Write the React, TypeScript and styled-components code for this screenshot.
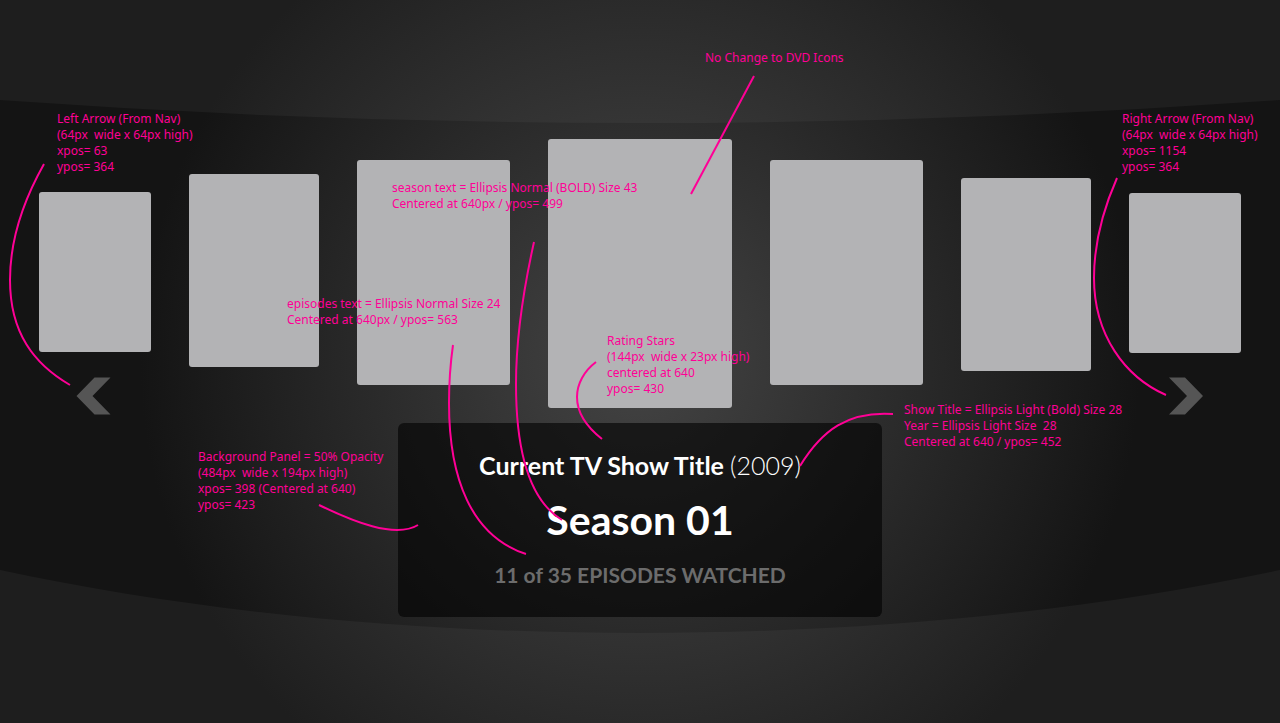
import React from 'react';
import styled, { createGlobalStyle } from 'styled-components';

const PINK = '#ff0096';

const GlobalStyle = createGlobalStyle`
  * { box-sizing: border-box; }
  body { margin: 0; background: #1e1e1e; }
`;

const Stage = styled.main`
  position: relative;
  min-height: 100vh;
  padding-top: 139px;
  overflow: hidden;
  font-family: Lato, 'Liberation Sans', sans-serif;
`;

const Backdrop = styled.svg`
  position: absolute;
  inset: 0;
  width: 100%;
  height: 100%;
`;

const Carousel = styled.ul`
  position: relative;
  display: flex;
  justify-content: center;
  align-items: flex-start;
  gap: 38px;
  min-height: 269px;
  margin: 0;
  padding: 0;
  list-style: none;
`;

const Poster = styled.li<{ $width: number; $height: number; $drop: number }>`
  flex: none;
  width: ${(p) => p.$width}px;
  height: ${(p) => p.$height}px;
  margin-top: ${(p) => p.$drop}px;
  border-radius: 3px;
  background: #b3b3b5;
`;

const Controls = styled.div`
  position: relative;
  display: flex;
  justify-content: space-between;
  align-items: flex-start;
  max-width: 1280px;
  margin: -44px auto 0;
  padding: 0 62px;
`;

const ArrowButton = styled.button`
  width: 64px;
  height: 64px;
  padding: 0;
  border: 0;
  background: none;
  cursor: pointer;

  svg {
    display: block;
    fill: #555;
  }
`;

const InfoPanel = styled.section`
  flex: 0 1 484px;
  min-height: 194px;
  margin-top: 59px;
  padding-top: 26px;
  border-radius: 6px;
  background: rgba(0, 0, 0, 0.6);
  color: #fff;
  text-align: center;
`;

const ShowTitle = styled.h1`
  margin: 0;
  font-size: 25px;
  font-weight: 700;
  line-height: 32px;
`;

const Year = styled.span`
  font-weight: 300;
`;

const Season = styled.h2`
  margin: 15px 0 0;
  font-size: 41px;
  font-weight: 700;
  line-height: 48px;
`;

const Episodes = styled.p`
  margin: 17px 0 0;
  color: #6c6c6c;
  font-size: 21px;
  font-weight: 700;
  line-height: 28px;
`;

/* Annotation layer: stays centred on the stage and lies over the mock-up. */
const Annotations = styled.div`
  position: absolute;
  top: 0;
  left: calc(50% - 640px);
  width: 1280px;
  pointer-events: none;
`;

const Leaders = styled.svg`
  display: block;
  fill: none;
  stroke: ${PINK};
  stroke-width: 2;
`;

const Note = styled.p<{ $x: number; $y: number }>`
  position: absolute;
  left: ${(p) => p.$x}px;
  top: ${(p) => p.$y}px;
  margin: 0;
  color: ${PINK};
  font-family: 'Noto Sans', 'Open Sans', sans-serif;
  font-size: 12px;
  line-height: 16px;
  white-space: pre;
`;

const posters = [
  { width: 112, height: 160, drop: 53 },
  { width: 130, height: 193, drop: 35 },
  { width: 153, height: 225, drop: 21 },
  { width: 184, height: 269, drop: 0 },
  { width: 153, height: 225, drop: 21 },
  { width: 130, height: 193, drop: 39 },
  { width: 112, height: 160, drop: 54 },
];

const leaders = [
  'M754 76L691 194',
  'M44 164C22 203 10 243 10 280C10 333 34 364 70 385',
  'M1117 178C1102 212 1094 247 1094 278C1094 335 1125 377 1166 395',
  'M534 242C524 287 516 335 516 384C516 452 529 500 562 520',
  'M453 345C450 366 449 385 449 403C449 478 471 536 526 554',
  'M596 362C584 371 577 384 577 397C577 413 588 428 602 439',
  'M893 414C848 411 822 430 800 466',
  'M319 505C352 521 395 539 418 525',
];

const notes = [
  { x: 705, y: 50, lines: ['No Change to DVD Icons'] },
  { x: 57, y: 111, lines: ['Left Arrow (From Nav)', '(64px  wide x 64px high)', 'xpos= 63', 'ypos= 364'] },
  { x: 1122, y: 111, lines: ['Right Arrow (From Nav)', '(64px  wide x 64px high)', 'xpos= 1154', 'ypos= 364'] },
  { x: 392, y: 180, lines: ['season text = Ellipsis Normal (BOLD) Size 43', 'Centered at 640px / ypos= 499'] },
  { x: 287, y: 296, lines: ['episodes text = Ellipsis Normal Size 24', 'Centered at 640px / ypos= 563'] },
  { x: 607, y: 333, lines: ['Rating Stars', '(144px  wide x 23px high)', 'centered at 640', 'ypos= 430'] },
  { x: 904, y: 402, lines: ['Show Title = Ellipsis Light (Bold) Size 28', 'Year = Ellipsis Light Size  28', 'Centered at 640 / ypos= 452'] },
  { x: 198, y: 449, lines: ['Background Panel = 50% Opacity', '(484px  wide x 194px high)', 'xpos= 398 (Centered at 640)', 'ypos= 423'] },
];

export default function App() {
  return (
    <>
      <GlobalStyle />
      <Stage>
        <Backdrop viewBox="0 0 1280 723" preserveAspectRatio="none" aria-hidden="true">
          <defs>
            <radialGradient id="wall" gradientUnits="userSpaceOnUse" cx="640" cy="361" r="500">
              <stop offset="0" stopColor="#4a4a4a" />
              <stop offset="1" stopColor="#1e1e1e" />
            </radialGradient>
            <radialGradient id="band" gradientUnits="userSpaceOnUse" cx="640" cy="361" r="500">
              <stop offset="0" stopColor="#444" />
              <stop offset="1" stopColor="#141414" />
            </radialGradient>
          </defs>
          <rect width="1280" height="723" fill="url(#wall)" />
          <path
            d="M0 100Q640 146 1280 100V570C1080 613 860 633 640 633C420 633 200 613 0 570Z"
            fill="url(#band)"
          />
        </Backdrop>

        <Carousel aria-label="Seasons">
          {posters.map((p, i) => (
            <Poster key={i} $width={p.width} $height={p.height} $drop={p.drop} />
          ))}
        </Carousel>

        <Controls>
          <ArrowButton type="button" aria-label="Previous season">
            <svg width="64" height="64" viewBox="0 0 64 64">
              <path d="M32.500 13.500H48.500L30.500 32L48.500 50.500H32.500L14.500 32Z" />
            </svg>
          </ArrowButton>
          <InfoPanel>
            <ShowTitle>
              Current TV Show Title <Year>(2009)</Year>
            </ShowTitle>
            <Season>Season 01</Season>
            <Episodes>11 of 35 EPISODES WATCHED</Episodes>
          </InfoPanel>
          <ArrowButton type="button" aria-label="Next season">
            <svg width="64" height="64" viewBox="0 0 64 64">
              <path d="M31 13.500H15L33 32L15 50.500H31L49 32Z" />
            </svg>
          </ArrowButton>
        </Controls>

        <Annotations>
          <Leaders width="1280" height="723" viewBox="0 0 1280 723" aria-hidden="true">
            {leaders.map((d) => (
              <path key={d} d={d} />
            ))}
          </Leaders>
          {notes.map((n) => (
            <Note key={n.lines[0]} $x={n.x} $y={n.y}>
              {n.lines.join('\n')}
            </Note>
          ))}
        </Annotations>
      </Stage>
    </>
  );
}
